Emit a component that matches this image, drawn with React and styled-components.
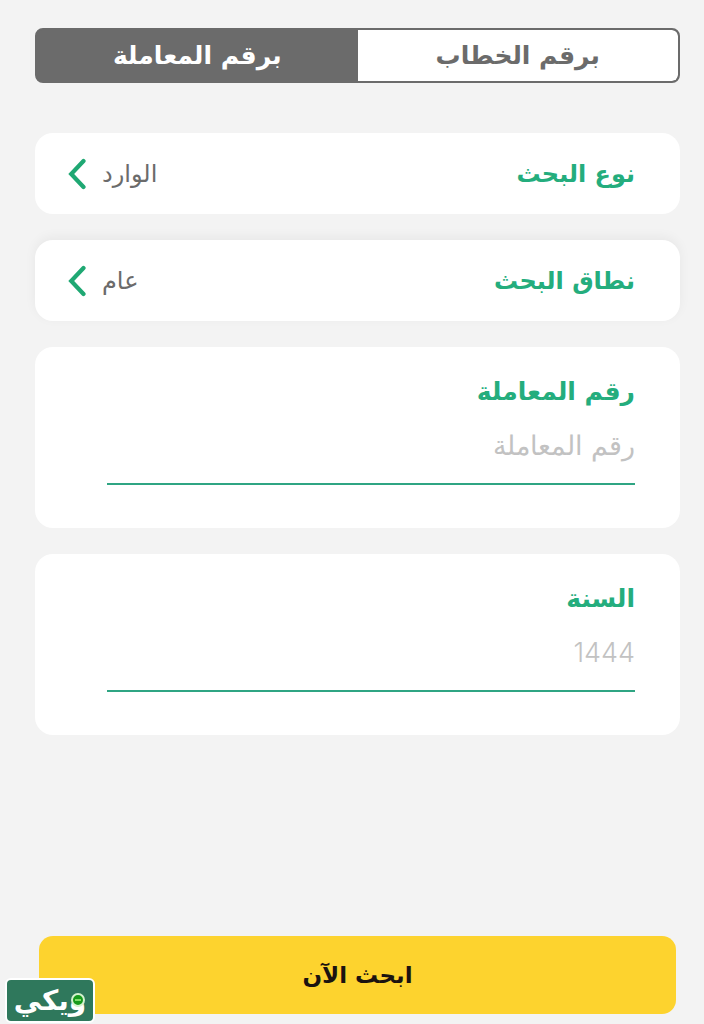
import React, { useState } from 'react'
import styled, { createGlobalStyle } from 'styled-components'

const GlobalStyle = createGlobalStyle`
  * {
    box-sizing: border-box;
  }
  body {
    margin: 0;
    background: #f3f3f3;
  }
  body, button, input {
    font-family: 'DejaVu Sans', sans-serif;
  }
`

const Page = styled.main`
  min-height: 100vh;
  display: flex;
  flex-direction: column;
  padding: 28px 24px 10px 35px;
`

const Tabs = styled.div`
  display: flex;
  height: 55px;
  margin-bottom: 50px;
  border: 2px solid #6b6b6b;
  border-radius: 8px;
  background: #6b6b6b;
  overflow: hidden;
`

const Tab = styled.button`
  flex: 1;
  padding: 0;
  border: 0;
  border-radius: ${props => props.$active ? '0' : '0 6px 6px 0'};
  font-size: 25px;
  font-weight: 700;
  line-height: 32px;
  cursor: pointer;
  background: ${props => props.$active ? '#6b6b6b' : 'white'};
  color: ${props => props.$active ? 'white' : '#6b6b6b'};
`

const Form = styled.form`
  flex: 1;
  display: flex;
  flex-direction: column;
  gap: 26px;
`

const Row = styled.button`
  display: flex;
  align-items: center;
  width: 100%;
  height: 81px;
  padding: 0 45px 0 33px;
  border: 0;
  border-radius: 18px;
  background: white;
  cursor: pointer;
  box-shadow: ${props => props.$raised ? '0 -3px 12px rgba(0, 0, 0, .05)' : 'none'};
`

const RowTitle = styled.span`
  flex: 1;
  text-align: right;
  font-size: 24px;
  font-weight: 700;
  line-height: 32px;
  color: #24ad7d;
`

const RowValue = styled.span`
  margin-left: 16px;
  font-size: 24px;
  line-height: 32px;
  color: #6b6b6b;
`

const Card = styled.div`
  padding: 29px 45px 43px 72px;
  border-radius: 18px;
  background: white;
`

const Label = styled.label`
  display: block;
  font-size: 25px;
  font-weight: 700;
  line-height: 32px;
  color: #24ad7d;
`

const Input = styled.input`
  display: block;
  width: 100%;
  height: 77px;
  padding: 0;
  border: 0;
  border-bottom: 2px solid #2fa583;
  background: none;
  outline: none;
  font-family: Inter, 'DejaVu Sans', sans-serif;
  font-size: 27px;
  font-weight: 300;
  color: #6b6b6b;
  &::placeholder {
    color: #c2c2c2;
    opacity: 1;
  }
`

const Submit = styled.button`
  height: 78px;
  margin: auto 4px 0;
  padding: 0;
  border: 0;
  border-radius: 14px;
  background: #fdd32e;
  color: #1b1310;
  font-size: 23px;
  font-weight: 700;
  line-height: 32px;
  cursor: pointer;
`

const Badge = styled.a`
  position: fixed;
  left: 5px;
  bottom: 1px;
  width: 90px;
  height: 45px;
  display: flex;
  justify-content: center;
  align-items: center;
  border: 2px solid white;
  border-radius: 6px;
  background: #2f785c;
  color: white;
  font-size: 28px;
  font-weight: 700;
  line-height: 28px;
  text-decoration: none;
`

const BadgeMark = styled.svg`
  position: absolute;
  right: 7px;
  top: 12px;
`

const Chevron = () => (
  <svg width="18" height="32" viewBox="0 0 18 32" fill="none" aria-hidden="true">
    <path d="M15.5 3 3.2 16l12.3 13" stroke="#1fa873" strokeWidth="4.2" strokeLinecap="round" />
  </svg>
)

const SelectRow = ({ title, value, raised }) => (
  <Row type="button" $raised={raised}>
    <RowTitle>{title}</RowTitle>
    <RowValue>{value}</RowValue>
    <Chevron />
  </Row>
)

const Field = ({ id, label, placeholder }) => (
  <Card>
    <Label htmlFor={id}>{label}</Label>
    <Input id={id} type="text" inputMode="numeric" placeholder={placeholder} />
  </Card>
)

const App = () => {
  const [tab, setTab] = useState('transaction')

  return (
    <Page dir="rtl" lang="ar">
      <GlobalStyle />
      <Tabs>
        <Tab type="button" $active={tab === 'letter'} onClick={() => setTab('letter')}>
          برقم الخطاب
        </Tab>
        <Tab type="button" $active={tab === 'transaction'} onClick={() => setTab('transaction')}>
          برقم المعاملة
        </Tab>
      </Tabs>
      <Form onSubmit={e => e.preventDefault()}>
        <SelectRow title="نوع البحث" value="الوارد" />
        <SelectRow title="نطاق البحث" value="عام" raised />
        <Field id="number" label="رقم المعاملة" placeholder="رقم المعاملة" />
        <Field id="year" label="السنة" placeholder="1444" />
        <Submit type="submit">ابحث الآن</Submit>
      </Form>
      <Badge href="#">
        ويكي
        <BadgeMark width="16" height="16" viewBox="0 0 16 16" aria-hidden="true">
          <circle cx="8" cy="8" r="6" fill="#179a1c" stroke="#d5f3cf" strokeWidth="2" />
          <path d="M5 7h6v2H5z" fill="#7fdc6a" />
        </BadgeMark>
      </Badge>
    </Page>
  )
}

export default App
